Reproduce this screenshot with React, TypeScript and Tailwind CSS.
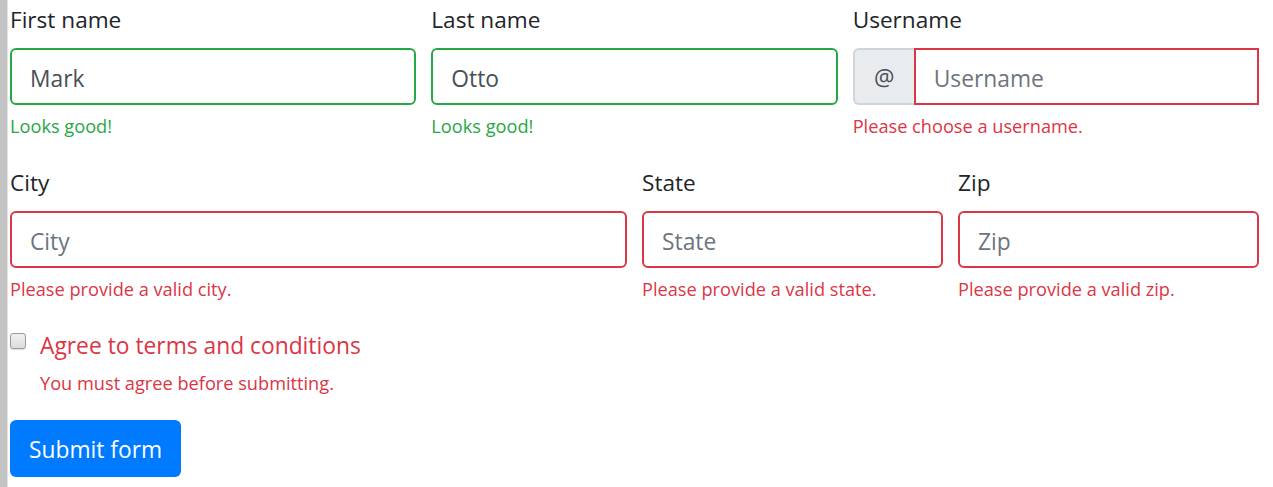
import React from 'react';

const FONT = "font-['Open_Sans',_'Noto_Sans',_sans-serif]";

function Feedback({ ok, children }: { ok?: boolean; children: React.ReactNode }) {
  return (
    <div className={`mt-[8px] text-[18.2px] leading-[27px] ${ok ? 'text-[#28a745]' : 'text-[#dc3545]'}`}>
      {children}
    </div>
  );
}

function Label({ children }: { children: React.ReactNode }) {
  return <label className="mb-[10px] block pt-[2px] text-[22.6px] leading-[36px] text-[#212529]">{children}</label>;
}

function Field({
  label,
  value,
  placeholder,
  ok,
  message,
}: {
  label: string;
  value?: string;
  placeholder?: string;
  ok?: boolean;
  message: string;
}) {
  return (
    <div className="mb-[23px] min-w-0">
      <Label>{label}</Label>
      <input
        readOnly
        defaultValue={value}
        placeholder={placeholder}
        className={`block h-[57px] w-full rounded-[6px] border-2 bg-white px-[18px] pt-[3px] text-[22.8px] text-[#495057] outline-none placeholder:text-[#6c757d] ${
          ok ? 'border-[#28a745]' : 'border-[#dc3545]'
        }`}
      />
      <Feedback ok={ok}>{message}</Feedback>
    </div>
  );
}

export default function App() {
  return (
    <div className={`flex h-[487px] w-full bg-white ${FONT}`}>
      <div className="w-[8px] shrink-0 border-r border-[#e2e2e2] bg-[#c3c3c3]" />
      <form className="min-w-0 flex-1 pl-[2px] pr-[14px]">
        <div className="grid grid-cols-3 gap-x-[15px]">
          <Field label="First name" value="Mark" ok message="Looks good!" />
          <Field label="Last name" value="Otto" ok message="Looks good!" />
          <div className="mb-[23px] min-w-0">
            <Label>Username</Label>
            <div className="flex h-[57px]">
              <span className="flex w-[61px] shrink-0 items-center justify-center rounded-l-[6px] border-2 border-r-0 border-[#ced4da] bg-[#e9ecef] pt-[3px] text-[22.8px] text-[#495057]">
                @
              </span>
              <input
                readOnly
                placeholder="Username"
                className="block h-full min-w-0 flex-1 border-2 border-[#dc3545] bg-white px-[18px] pt-[3px] text-[22.8px] text-[#495057] outline-none placeholder:text-[#6c757d]"
              />
            </div>
            <Feedback>Please choose a username.</Feedback>
          </div>
        </div>

        <div className="grid grid-cols-4 gap-x-[15px]">
          <div className="col-span-2">
            <Field label="City" placeholder="City" message="Please provide a valid city." />
          </div>
          <Field label="State" placeholder="State" message="Please provide a valid state." />
          <Field label="Zip" placeholder="Zip" message="Please provide a valid zip." />
        </div>

        <div className="mb-[23px] flex gap-[14px]">
          <input
            type="checkbox"
            className="mt-[7px] h-4 w-4 shrink-0 appearance-none rounded-[3px] border border-[#9a9a9a] bg-gradient-to-b from-[#f0f0f0] to-[#dcdcdc] shadow-[0_1px_1px_rgba(0,0,0,0.15)]"
          />
          <div>
            <label className="block pt-[3px] text-[22.8px] leading-[33px] text-[#dc3545]">
              Agree to terms and conditions
            </label>
            <Feedback>You must agree before submitting.</Feedback>
          </div>
        </div>

        <button
          type="button"
          className="h-[57px] rounded-[6px] bg-[#007bff] px-[19px] pt-[2px] text-[22.8px] leading-[36px] text-white"
        >
          Submit form
        </button>
      </form>
    </div>
  );
}
